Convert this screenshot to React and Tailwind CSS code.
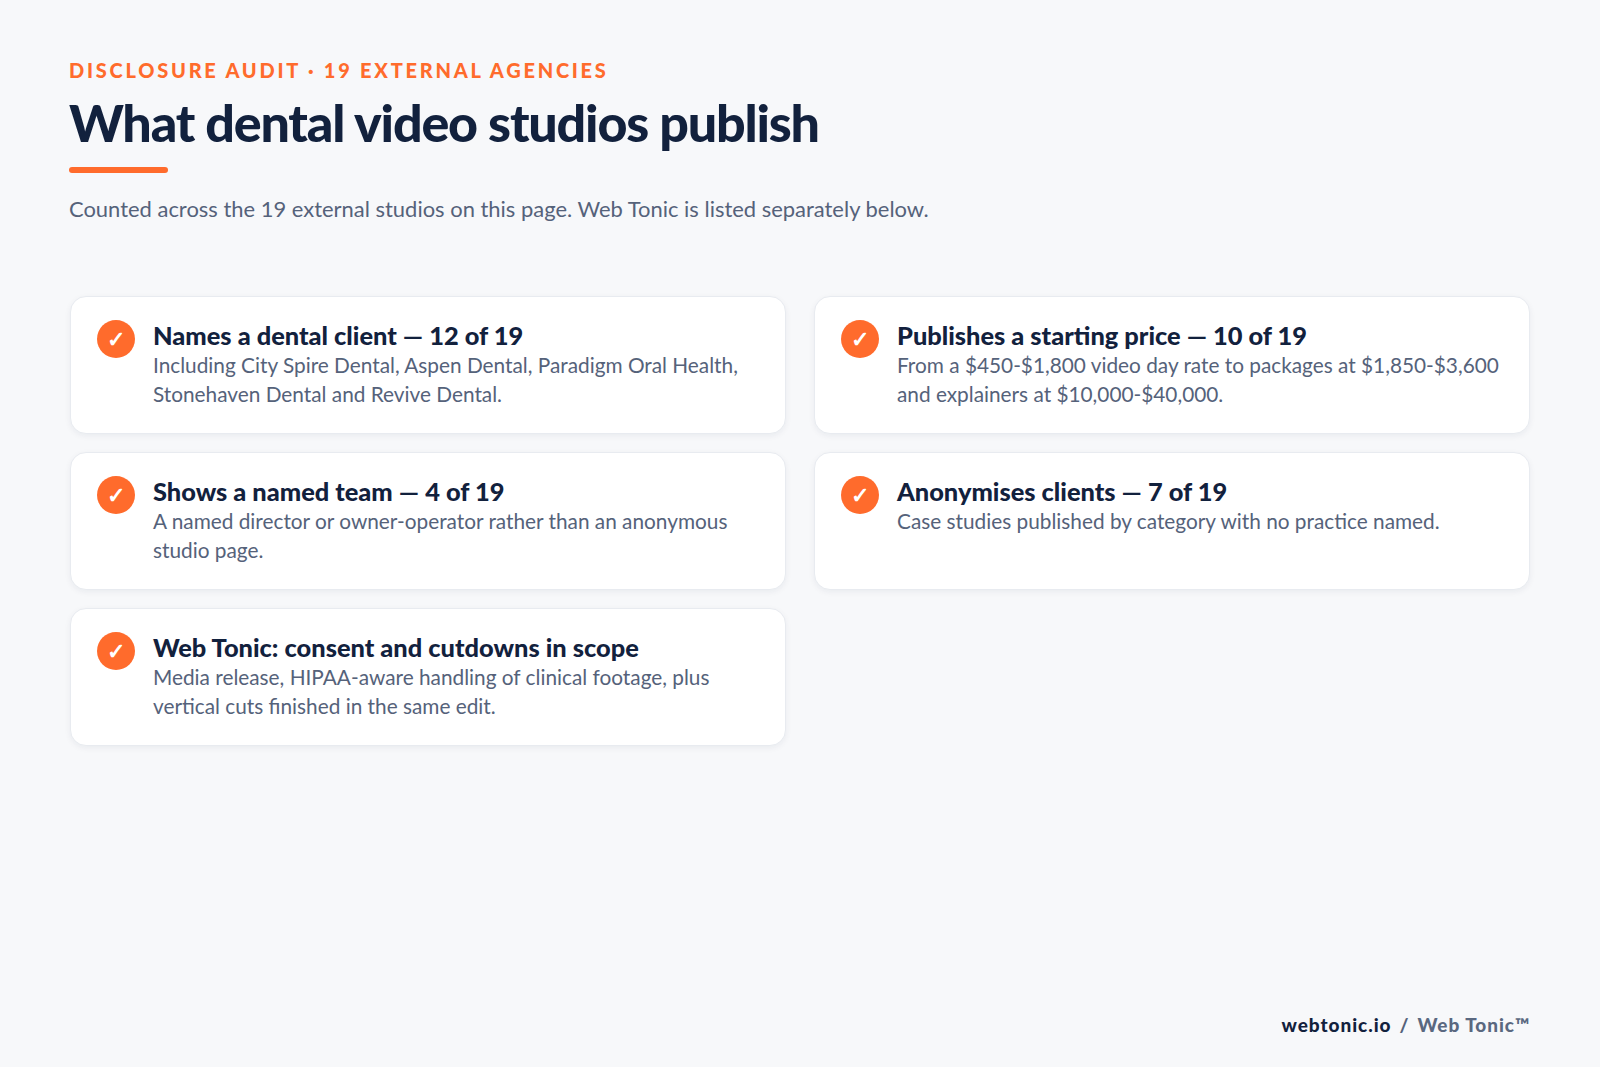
import React from "react";

const items = [
  {
    title: "Names a dental client — 12 of 19",
    body: "Including City Spire Dental, Aspen Dental, Paradigm Oral Health, Stonehaven Dental and Revive Dental.",
  },
  {
    title: "Publishes a starting price — 10 of 19",
    body: "From a $450-$1,800 video day rate to packages at $1,850-$3,600 and explainers at $10,000-$40,000.",
  },
  {
    title: "Shows a named team — 4 of 19",
    body: "A named director or owner-operator rather than an anonymous studio page.",
  },
  {
    title: "Anonymises clients — 7 of 19",
    body: "Case studies published by category with no practice named.",
  },
  {
    title: "Web Tonic: consent and cutdowns in scope",
    body: "Media release, HIPAA-aware handling of clinical footage, plus vertical cuts finished in the same edit.",
  },
];

const Card = ({ title, body }) => {
  return (
    <div className="flex items-start gap-[18px] h-[138px] pl-[26px] pr-[20px] pt-[24px] bg-white rounded-[16px] border border-[#e8ebf0] shadow-[0_2px_6px_rgba(15,32,60,0.06)]">
      <div className="flex items-center justify-center shrink-0 w-[38px] h-[38px] -mt-px rounded-full bg-[#ff6b2c] text-white text-[22px] font-bold leading-none">
        ✓
      </div>
      <div>
        <h3 className="text-[25.4px] leading-[29px] font-black text-[#12213d]">{title}</h3>
        <p className="text-[20.8px] leading-[29.4px] text-[#55627a]">{body}</p>
      </div>
    </div>
  );
};

const App = () => {
  return (
    <div className="flex flex-col w-[1600px] h-[1067px] px-[70px] pt-[56px] pb-[28px] bg-[#f7f8fa] font-['Lato',sans-serif]">
      <div className="-ml-px text-[20px] leading-[28px] font-black tracking-[2.75px] text-[#ff6b2c]">
        DISCLOSURE AUDIT · 19 EXTERNAL AGENCIES
      </div>
      <h1 className="-ml-px mt-[6px] text-[52px] leading-[64px] font-black tracking-[-1.2px] text-[#12213d]">
        What dental video studios publish
      </h1>
      <div className="-ml-px mt-[13px] w-[99px] h-[6px] rounded-full bg-[#ff6b2c]" />
      <p className="-ml-px mt-[20px] text-[21.95px] leading-[32px] text-[#55627a]">
        Counted across the 19 external studios on this page. Web Tonic is listed separately below.
      </p>
      <div className="grid grid-cols-2 gap-x-[28px] gap-y-[18px] mt-[71px]">
        {items.map((item) => (
          <Card key={item.title} {...item} />
        ))}
      </div>
      <div className="flex justify-end text-[19px] leading-[28px] font-black tracking-[0.95px] mt-auto">
        <span className="text-[#12213d]">webtonic.io</span>
        <span className="mx-[8px] text-[#55627a]">/</span>
        <span className="text-[#5a6880]">Web Tonic™</span>
      </div>
    </div>
  );
};

export default App;
